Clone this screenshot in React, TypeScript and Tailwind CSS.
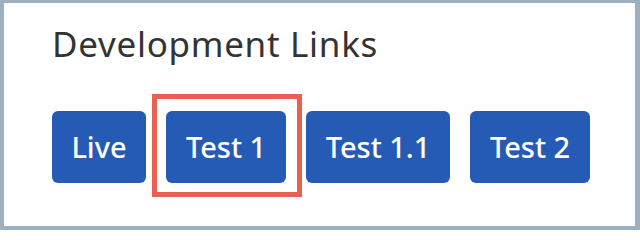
const links = [
  { label: 'Live', width: 'w-[94px]' },
  { label: 'Test 1', width: 'w-[120px]', highlight: true },
  { label: 'Test 1.1', width: 'w-[144px]' },
  { label: 'Test 2', width: 'w-[120px]' },
];

export default function App() {
  return (
    <div className="w-[640px] h-[230px] bg-[#9cb1bd] pt-[3px] pl-[4px] pr-[5px] pb-[4px] font-['Noto_Sans',sans-serif]">
      <div className="h-full bg-white pl-[48px] pt-[19px]">
        <h2 className="text-[35px] leading-[44px] tracking-[0.7px] text-[#333333]">Development Links</h2>
        <div className="mt-[45px] flex gap-[20px]">
          {links.map((l) => (
            <div key={l.label} className="relative">
              {l.highlight && (
                <div className="absolute -left-[14px] -right-[16px] -top-[17px] -bottom-[14px] border-[5px] border-[#e8604f]" />
              )}
              <a
                href="#"
                className={`relative flex h-[72px] items-center justify-center rounded-[6px] bg-[#255bb5] text-[29px] font-medium text-white ${l.width}`}
              >
                {l.label}
              </a>
            </div>
          ))}
        </div>
      </div>
    </div>
  );
}
